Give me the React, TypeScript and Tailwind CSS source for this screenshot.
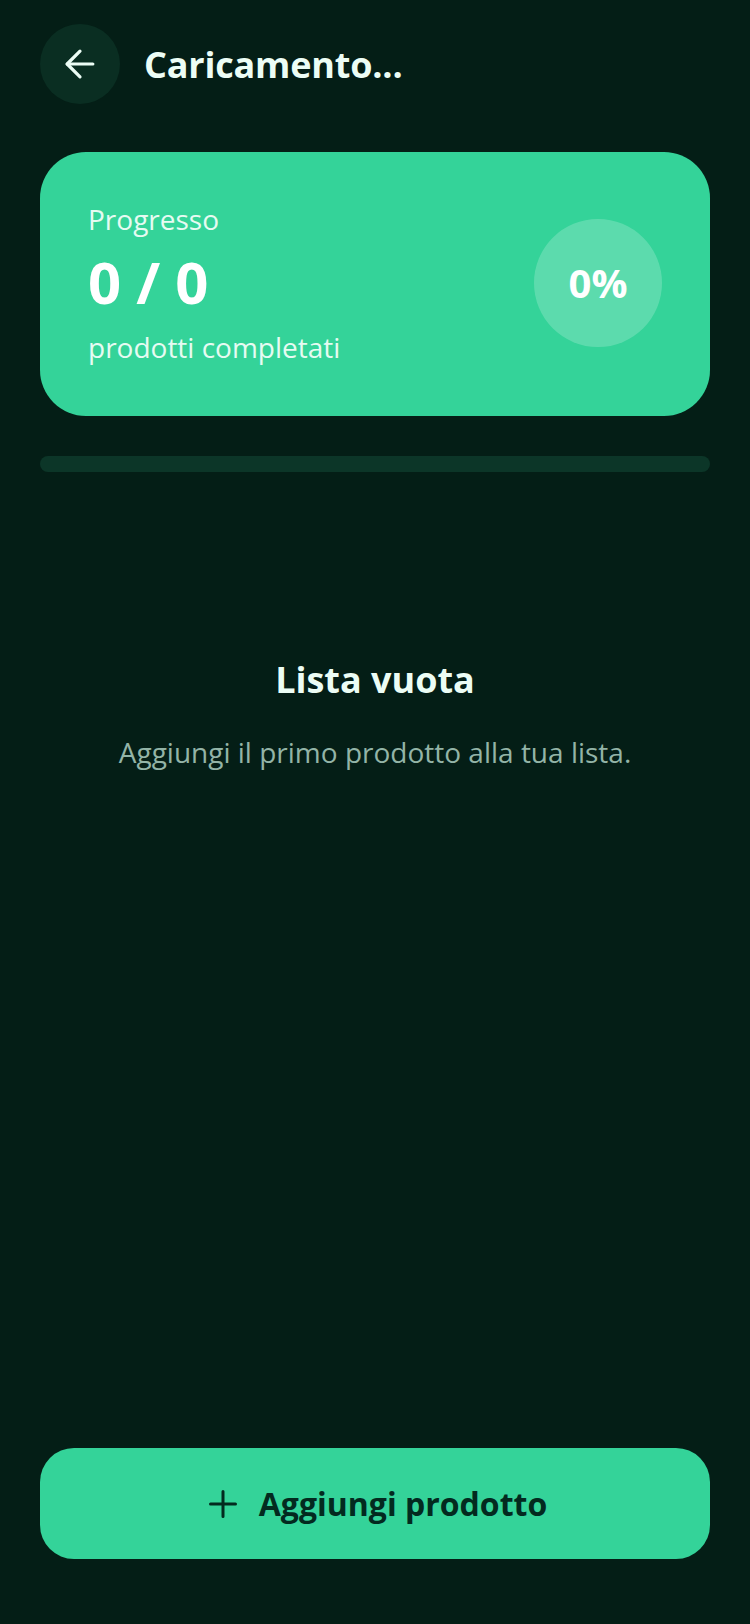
import { ArrowLeft } from "lucide-react";

function PlusIcon() {
  return (
    <svg width="28" height="28" viewBox="0 0 28 28" fill="none" className="shrink-0">
      <path d="M14 1.5v25M1.5 14h25" stroke="currentColor" strokeWidth="3" strokeLinecap="round" />
    </svg>
  );
}

export default function App() {
  const done = 0;
  const total = 0;
  const pct = total > 0 ? Math.round((done / total) * 100) : 0;

  return (
    <div
      className="min-h-screen flex flex-col bg-[#041e16] text-[#ecfdf5] px-10"
      style={{ fontFamily: '"Open Sans", "Noto Sans", sans-serif' }}
    >
      {/* header */}
      <header className="flex items-center gap-6 pt-6">
        <button className="w-20 h-20 rounded-full bg-[#0a2e22] flex items-center justify-center shrink-0">
          <ArrowLeft size={44} strokeWidth={1.75} className="text-[#ecfdf5]" />
        </button>
        <h1 className="text-[36px] leading-[43px] font-bold tracking-[-0.2px]">Caricamento...</h1>
      </header>

      {/* progress card */}
      <section className="mt-12 rounded-[46px] bg-[#34d399] pl-12 pr-12 pt-12 pb-[50px] flex items-center justify-between">
        <div className="flex flex-col">
          <p className="text-[28px] leading-[38px] text-[#e6fbf2]">Progresso</p>
          <p className="mt-3 text-[58px] leading-[64px] font-bold text-white">
            {done} / {total}
          </p>
          <p className="mt-[14px] text-[28px] leading-[38px] text-[#e6fbf2]">prodotti completati</p>
        </div>
        <div className="w-32 h-32 rounded-full bg-white/20 flex items-center justify-center">
          <span className="text-[40px] font-bold text-white">{pct}%</span>
        </div>
      </section>

      {/* bar */}
      <div className="mt-10 h-4 rounded-full bg-[#0c3628] overflow-hidden">
        <div className="h-full bg-[#34d399]" style={{ width: `${pct}%` }} />
      </div>

      {/* empty state */}
      <div className="flex-1 flex flex-col items-center pt-[186px]">
        <h2 className="text-[36px] leading-[43px] font-bold">Lista vuota</h2>
        <p className="mt-[30px] text-[28px] leading-[42px] text-[#93b4a7]">
          Aggiungi il primo prodotto alla tua lista.
        </p>
      </div>

      {/* add button */}
      <div className="pb-[65px]">
        <button className="w-full h-[111px] pl-[6px] rounded-[34px] bg-[#34d399] text-[#032a1f] flex items-center justify-center gap-[22px]">
          <PlusIcon />
          <span className="text-[32px] font-bold">Aggiungi prodotto</span>
        </button>
      </div>
    </div>
  );
}
